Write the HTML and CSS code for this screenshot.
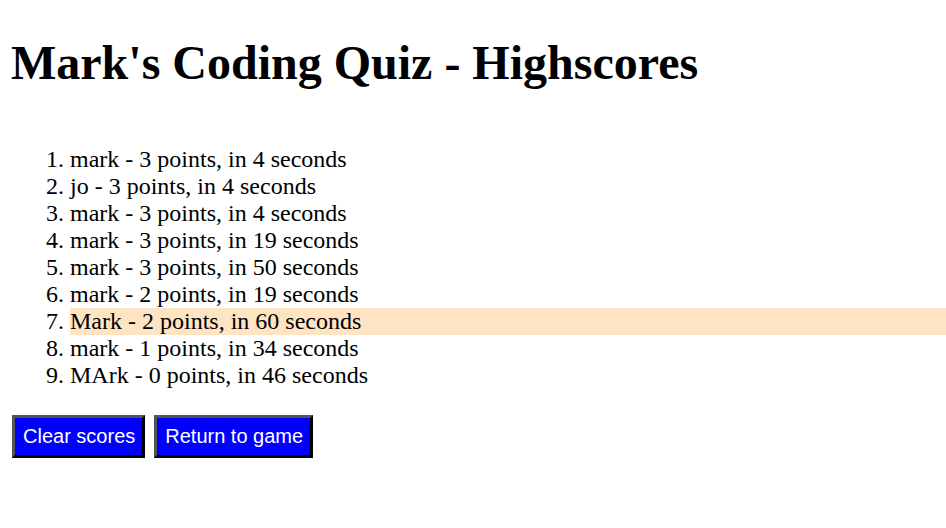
FILE: index.html
```html
<!DOCTYPE html>
<html lang="en">
<head>
<meta charset="utf-8">
<title>Mark's Coding Quiz - Highscores</title>
<link rel="stylesheet" href="styles.css">
</head>
<body>
<h1 class="title">Mark's Coding Quiz - Highscores</h1>
<ol class="scores">
  <li>mark - 3 points, in 4 seconds</li>
  <li>jo - 3 points, in 4 seconds</li>
  <li>mark - 3 points, in 4 seconds</li>
  <li>mark - 3 points, in 19 seconds</li>
  <li>mark - 3 points, in 50 seconds</li>
  <li>mark - 2 points, in 19 seconds</li>
  <li class="latest">Mark - 2 points, in 60 seconds</li>
  <li>mark - 1 points, in 34 seconds</li>
  <li>MArk - 0 points, in 46 seconds</li>
</ol>
<div class="actions">
  <button class="btn">Clear scores</button>
  <button class="btn">Return to game</button>
</div>
</body>
</html>
```
FILE: styles.css
```css
html, body {
  margin: 0;
  padding: 0;
  background: #fff;
}
body {
  font-family: "Liberation Serif", "Times New Roman", serif;
  color: #000;
}
.title {
  font-size: 48px;
  font-weight: bold;
  margin: 35px 0 0 11px;
  line-height: 55px;
}
.scores {
  font-size: 24px;
  margin: 56px 0 0 0;
  padding-left: 70px;
}
.latest {
  background: #ffe4c4;
}
.actions {
  display: flex;
  gap: 9px;
  margin: 26px 0 0 12px;
}
.btn {
  font-family: "Liberation Sans", Arial, sans-serif;
  font-size: 20px;
  color: #fff;
  background: #0000ff;
  border: 3px solid;
  border-color: #555 #000 #000 #555;
  padding: 7px 7px 7px 8px;
  line-height: 23px;
  margin: 0;
  cursor: pointer;
}
```
